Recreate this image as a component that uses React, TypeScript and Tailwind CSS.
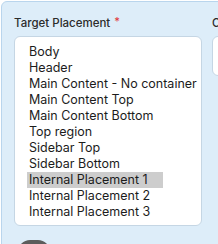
const OPTIONS = [
  'Body',
  'Header',
  'Main Content - No container',
  'Main Content Top',
  'Main Content Bottom',
  'Top region',
  'Sidebar Top',
  'Sidebar Bottom',
  'Internal Placement 1',
  'Internal Placement 2',
  'Internal Placement 3',
]

export default function App() {
  return (
    <div className="h-[244px] w-[218px] overflow-hidden bg-white pl-px pt-px font-['Inter',sans-serif]">
      <div className="w-[440px] h-[300px] rounded-md border border-[#b9d5ed] bg-[#ddedf9] pl-3 pt-[13px]">
        <div className="flex gap-[10px]">
          {/* Target placement */}
          <div className="w-[188px] shrink-0">
            <label className="flex items-start gap-1 text-[11.5px] leading-4 font-medium text-[#2b2b2b]">
              Target Placement
              <span className="text-[11px] leading-3 text-[#e0393e]">*</span>
            </label>
            <div className="mt-[5px] h-[190px] rounded-md border border-[#c5d6e4] bg-white pl-3 pt-[7px]">
              {OPTIONS.map(opt => (
                <div
                  key={opt}
                  className={`h-4 w-[136px] pl-[2px] text-[12.5px] leading-4 whitespace-nowrap text-[#1c1c1c] ${
                    opt === 'Internal Placement 1' ? 'bg-[#cdcdcd]' : ''
                  }`}
                >
                  {opt}
                </div>
              ))}
            </div>
          </div>

          {/* Next column, cut off */}
          <div className="w-[188px] shrink-0">
            <label className="block text-[11.5px] leading-4 font-medium text-[#2b2b2b]">Condition</label>
            <div className="mt-[5px] h-[40px] rounded-md border border-[#c5d6e4] bg-white" />
          </div>
        </div>

        <div className="ml-1 mt-[14px] h-6 w-8 rounded-full bg-[#5c5c5c]" />
      </div>
    </div>
  )
}
